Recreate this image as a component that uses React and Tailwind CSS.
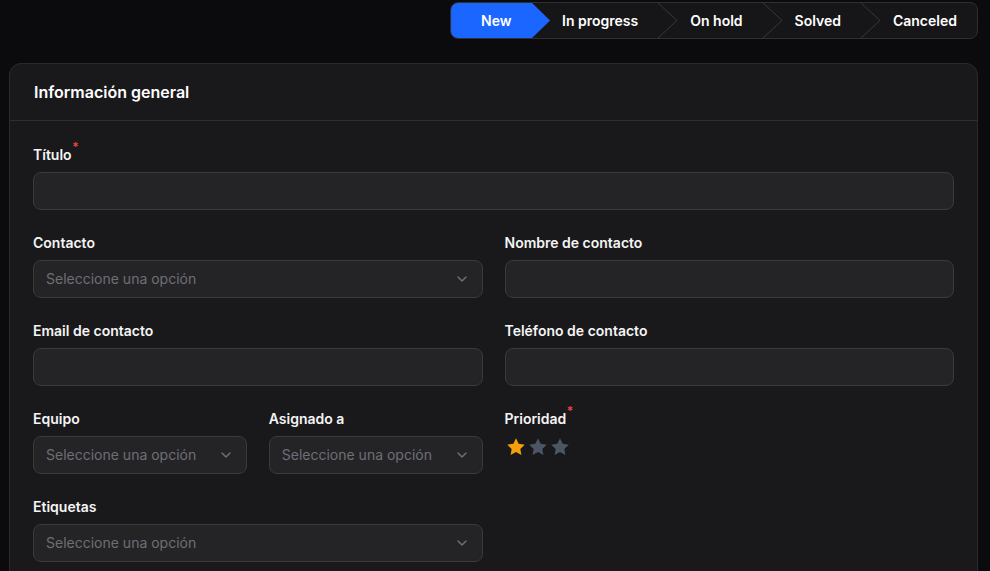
import React from "react";
import { ChevronDown } from "lucide-react";

const font = { fontFamily: "Inter, 'Noto Sans', sans-serif" };

function Chev() {
  return (
    <svg width="20" height="35" viewBox="0 0 20 35" className="shrink-0">
      <polyline points="0,0 19,17.5 0,35" fill="none" stroke="#38383d" strokeWidth="1" />
    </svg>
  );
}

function Stepper() {
  return (
    <div className="flex h-[37px] items-stretch overflow-hidden rounded-lg border border-[#2f2f33] bg-[#161618] text-sm font-semibold text-white">
      <div className="flex w-[99px] items-center bg-[#1a66ff] pl-[30px] [clip-path:polygon(0_0,calc(100%_-_18px)_0,100%_50%,calc(100%_-_18px)_100%,0_100%)]">
        New
      </div>
      <div className="flex items-center pl-3 pr-5">In progress</div>
      <Chev />
      <div className="flex items-center pl-3 pr-5">On hold</div>
      <Chev />
      <div className="flex items-center pl-3 pr-5">Solved</div>
      <Chev />
      <div className="flex items-center pl-3 pr-5">Canceled</div>
    </div>
  );
}

function Label({ children, required }) {
  return (
    <div className="flex h-5 items-center pt-px text-sm font-semibold text-[#f4f4f5]">
      <span className="relative">
        {children}
        {required && (
          <span className="absolute -right-[7px] -top-[4px] text-xs leading-none text-[#ef4444]">*</span>
        )}
      </span>
    </div>
  );
}

function Input() {
  return <div className="h-[38px] rounded-lg border border-[#3a3a3e] bg-[#242426]" />;
}

function Select() {
  return (
    <div className="flex h-[38px] items-center justify-between rounded-lg border border-[#3a3a3e] bg-[#242426] pl-3 pr-3">
      <span className="truncate text-sm text-[#6e6e76]">Seleccione una opción</span>
      <ChevronDown size={16} strokeWidth={2} className="shrink-0 text-[#6b7280]" />
    </div>
  );
}

function Field({ label, required, children, className = "" }) {
  return (
    <div className={"flex flex-col gap-2 " + className}>
      <Label required={required}>{label}</Label>
      {children}
    </div>
  );
}

function Star({ color }) {
  return (
    <svg width="20" height="20" viewBox="0 0 24 24">
      <path
        d="M12 1.5l3.2 6.7 7.3 1-5.3 5.1 1.3 7.3L12 18.1l-6.5 3.5 1.3-7.3L1.5 9.2l7.3-1z"
        fill={color}
      />
    </svg>
  );
}

export default function App() {
  return (
    <div className="min-h-[571px] overflow-hidden bg-[#0b0b0d] pl-[9px] pr-[12px] pt-[2px]" style={font}>
      <div className="flex justify-end">
        <Stepper />
      </div>
      <div className="mt-6 rounded-xl border border-[#2a2a2e] bg-[#19191b]">
        <div className="flex h-[57px] items-center border-b border-[#2e2e32] px-6">
          <h2 className="text-base font-semibold text-white">Información general</h2>
        </div>
        <div className="grid grid-cols-2 gap-x-[22px] gap-y-[22px] px-[23px] pb-10 pt-[23px]">
          <Field label="Título" required className="col-span-2">
            <Input />
          </Field>
          <Field label="Contacto">
            <Select />
          </Field>
          <Field label="Nombre de contacto">
            <Input />
          </Field>
          <Field label="Email de contacto">
            <Input />
          </Field>
          <Field label="Teléfono de contacto">
            <Input />
          </Field>
          <div className="grid grid-cols-2 gap-x-[22px]">
            <Field label="Equipo">
              <Select />
            </Field>
            <Field label="Asignado a">
              <Select />
            </Field>
          </div>
          <Field label="Prioridad" required>
            <div className="ml-px mt-px flex gap-[2px]">
              <Star color="#f59e0b" />
              <Star color="#4b5563" />
              <Star color="#4b5563" />
            </div>
          </Field>
          <Field label="Etiquetas">
            <Select />
          </Field>
        </div>
      </div>
    </div>
  );
}
